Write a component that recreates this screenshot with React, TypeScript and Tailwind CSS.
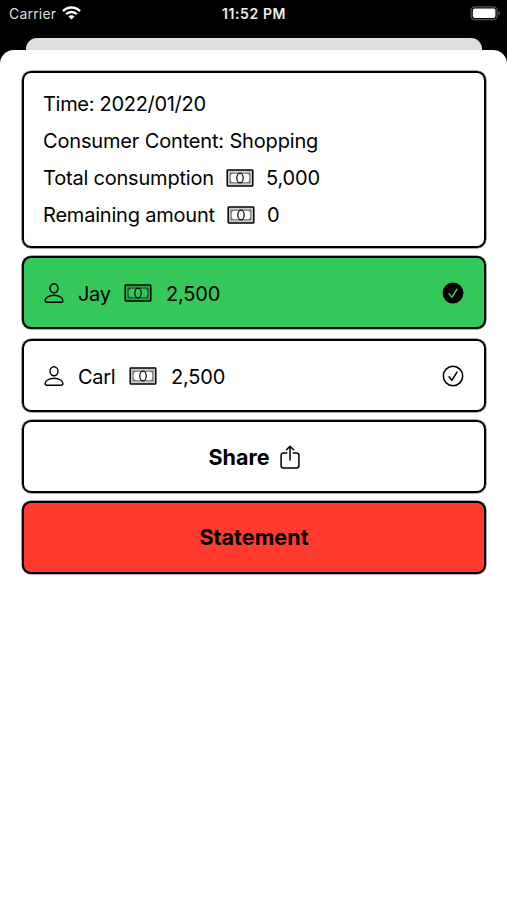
import clsx from 'clsx'
import { ReactNode } from 'react'

interface Person {
	name: string
	amount: string
	paid: boolean
	nameClass: string
}

const people: Person[] = [
	{ name: 'Jay', amount: '2,500', paid: true, nameClass: 'w-[32px]' },
	{ name: 'Carl', amount: '2,500', paid: false, nameClass: 'w-[37px]' }
]

function WifiIcon(): ReactNode {
	return (
		<svg className="h-[14px] w-[19px]" viewBox="0 0 19 14">
			<g fill="none" stroke="#fff" strokeWidth="2.5">
				<path d="M1 5.1C5.8.3 13.2.3 18 5.1" />
				<path d="M4.1 8.2c3.1-3 7.7-3 10.8 0" />
			</g>
			<path d="M9.5 13.6 6.4 10.5c1.7-1.6 4.5-1.6 6.2 0Z" fill="#fff" />
		</svg>
	)
}

function BatteryIcon(): ReactNode {
	return (
		<svg className="h-[15px] w-[31px]" viewBox="0 0 31 15">
			<rect x="1.1" y=".8" width="26" height="12.8" rx="3.6" fill="none" stroke="#59595b" strokeWidth="1.2" />
			<rect x="2.8" y="2.5" width="22.6" height="9.4" rx="2" fill="#fff" />
			<path d="M28.5 4.9c2 .8 2 3.8 0 4.6Z" fill="#59595b" />
		</svg>
	)
}

function MoneyIcon({ className }: { className?: string }): ReactNode {
	return (
		<svg
			className={clsx('h-[18px] w-[28px] shrink-0', className)}
			viewBox="0 0 28 18"
			fill="none"
			stroke="currentColor"
		>
			<rect x="2.5" y="2.4" width="23" height="13.2" strokeWidth="2.4" strokeOpacity=".2" />
			<rect x="1.2" y="1.1" width="25.6" height="15.8" rx=".6" strokeWidth="1.5" />
			<rect x="4.1" y="4.1" width="19.8" height="9.8" strokeWidth=".9" strokeOpacity=".75" />
			<path
				d="M4.1 6.2c1.2 0 2-.8 2-2.1M23.9 6.2c-1.2 0-2-.8-2-2.1M4.1 11.8c1.2 0 2 .8 2 2.1M23.9 11.8c-1.2 0-2 .8-2 2.1"
				strokeWidth=".6"
				strokeOpacity=".5"
			/>
			<ellipse cx="14" cy="9" rx="3.2" ry="4.9" strokeWidth="1.2" />
		</svg>
	)
}

function PersonIcon(): ReactNode {
	return (
		<svg className="h-[22px] w-[20px] shrink-0" viewBox="0 0 20 22" fill="none" stroke="currentColor" strokeWidth="1.4">
			<ellipse cx="10" cy="6.3" rx="4" ry="4.5" />
			<path d="M3 20.2C1.7 20.2 1.1 19.6 1.1 18.5 1.1 16.1 4.4 13.3 10 13.3s8.9 2.8 8.9 5.2c0 1.1-.6 1.7-1.9 1.7Z" />
		</svg>
	)
}

function CheckIcon({ filled }: { filled: boolean }): ReactNode {
	return (
		<svg className="h-[22px] w-[22px] shrink-0" viewBox="0 0 22 22" fill="none">
			<circle cx="11" cy="11" r="9.7" fill={filled ? '#000' : 'none'} stroke="#000" strokeWidth="1.5" />
			<path
				d="m7 11.8 2.9 3.5 5.1-8.2"
				stroke={filled ? '#34c759' : '#000'}
				strokeWidth="1.5"
				strokeLinecap="round"
				strokeLinejoin="round"
			/>
		</svg>
	)
}

function ShareIcon(): ReactNode {
	return (
		<svg
			className="h-[26px] w-[20px] shrink-0"
			viewBox="0 0 20 26"
			fill="none"
			stroke="currentColor"
			strokeWidth="1.5"
			strokeLinecap="round"
			strokeLinejoin="round"
		>
			<path d="M6.8 9H3.6Q1.1 9 1.1 11.5v9.9q0 2.5 2.5 2.5h12.8q2.5 0 2.5-2.5v-9.9Q18.9 9 16.4 9h-3.2" />
			<path d="M10 16V2.4M6.5 5.7 10 2.2l3.5 3.5" />
		</svg>
	)
}

function Card({ className, children }: { className?: string; children: ReactNode }): ReactNode {
	return (
		<div
			className={clsx(
				'rounded-[9px] border-2 border-black shadow-[0_0_0_0.5px_rgba(0,0,0,0.65)]',
				className
			)}
		>
			{children}
		</div>
	)
}

export default function App(): ReactNode {
	return (
		<div className="flex h-[900px] w-[507px] flex-col overflow-hidden bg-black font-['Inter','Liberation_Sans',sans-serif] text-black">
			{/* Status bar */}
			<div className="grid h-[38px] grid-cols-3 items-start text-[14px] leading-[28px] text-white">
				<div className="flex pl-[9px]">
					<span className="w-[53px] tracking-[0.2px] text-[#dedede]">Carrier</span>
					<div className="pt-[6px]">
						<WifiIcon />
					</div>
				</div>
				<div className="pl-px text-center font-semibold tracking-[0.6px] whitespace-nowrap text-[#eee]">11:52 PM</div>
				<div className="flex justify-end pt-[6px] pr-[6px]">
					<BatteryIcon />
				</div>
			</div>

			<div className="mr-[25px] ml-[26px] h-[12px] shrink-0 rounded-t-[11px] bg-[#dfdfdf]" />

			{/* Sheet */}
			<div className="flex flex-1 flex-col rounded-t-[14px] bg-white pt-[21px] pr-[21px] pl-[22px] text-[20px] tracking-[-0.16px]">
				<Card className="h-[177px] pt-[13px] pl-[19px] leading-[37px] whitespace-nowrap">
					<div className="tracking-[-0.3px]">Time: 2022/01/20</div>
					<div>Consumer Content: Shopping</div>
					<div className="flex items-center">
						<span className="w-[183px] tracking-[-0.2px]">Total consumption</span>
						<MoneyIcon className="mb-[2px]" />
						<span className="ml-[12px]">5,000</span>
					</div>
					<div className="flex items-center">
						<span className="w-[184px] tracking-[-0.2px]">Remaining amount</span>
						<MoneyIcon className="mb-[2px]" />
						<span className="ml-[12px]">0</span>
					</div>
				</Card>

				<div className="mt-[8px] flex flex-col gap-[10px]">
					{people.map((person) => (
						<Card
							key={person.name}
							className={clsx(
								'flex h-[73px] items-center pr-[20px] pl-[20px]',
								person.paid && 'bg-[#34c759]'
							)}
						>
							<PersonIcon />
							<span
								className={clsx(
									'mt-[2px] mr-[14px] ml-[14px] tracking-[-0.3px] whitespace-nowrap',
									person.nameClass
								)}
							>
								{person.name}
							</span>
							<MoneyIcon />
							<span className="mt-[2px] ml-[14px] flex-1">{person.amount}</span>
							<CheckIcon filled={person.paid} />
						</Card>
					))}
				</div>

				<Card className="mt-[8px] flex h-[73px] items-center justify-center gap-[10px] text-[21.5px] font-bold tracking-[0.05px]">
					<span className="mt-px">Share</span>
					<ShareIcon />
				</Card>
				<Card className="mt-[8px] flex h-[73px] items-center justify-center bg-[#ff3b30] text-[21.5px] font-bold tracking-[0.05px]">
					Statement
				</Card>
			</div>
		</div>
	)
}
